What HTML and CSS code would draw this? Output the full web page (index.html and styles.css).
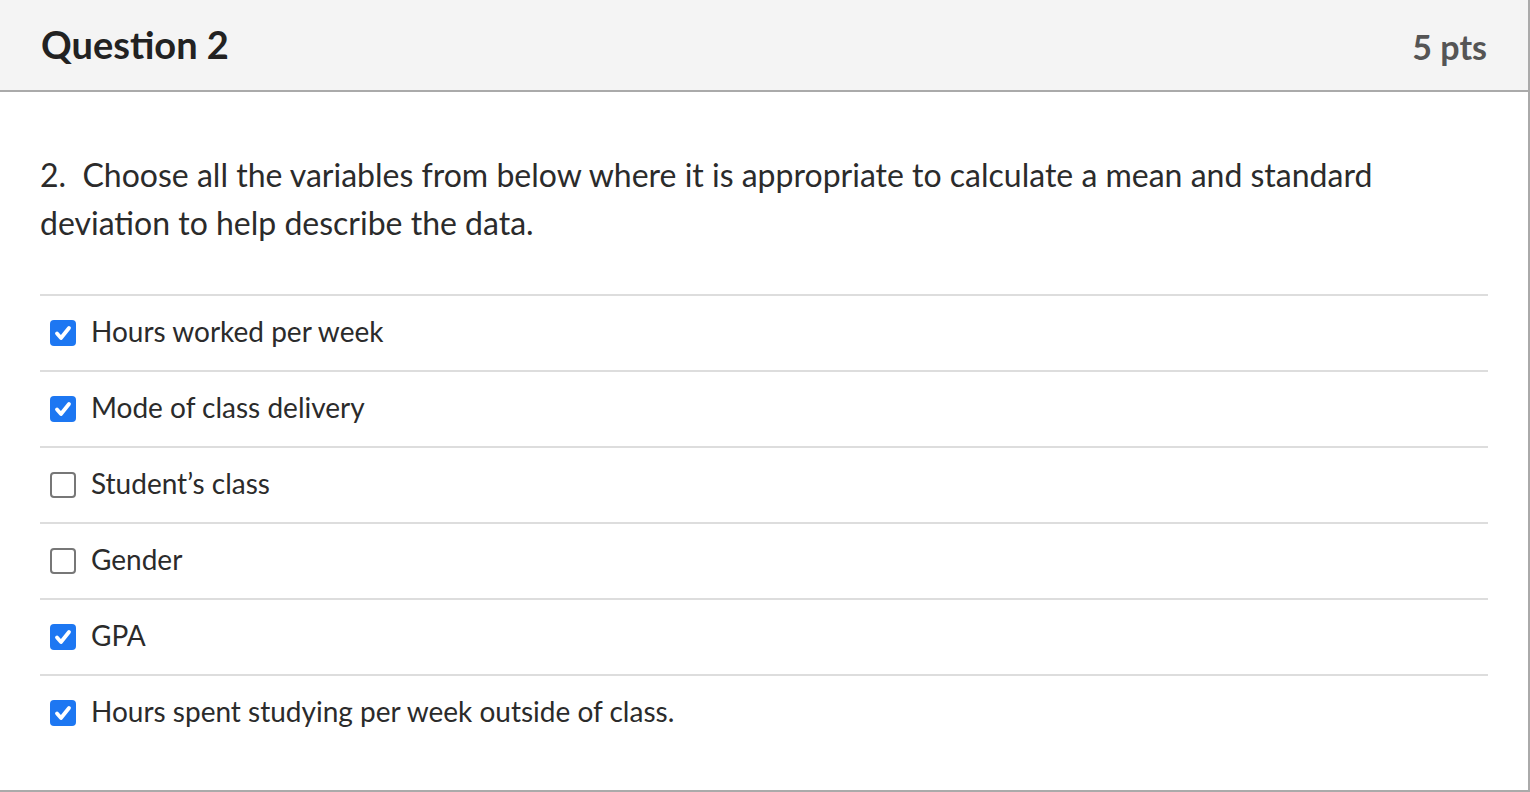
FILE: index.html
```html
<!DOCTYPE html>
<html lang="en">
<head>
<meta charset="utf-8">
<title>Question 2</title>
<link rel="stylesheet" href="styles.css">
</head>
<body>
<div class="question">
  <div class="q-header">
    <h2 class="q-title">Question 2</h2>
    <span class="q-points">5 pts</span>
  </div>
  <div class="q-body">
    <p class="q-text">2.&nbsp; Choose all the variables from below where it is appropriate to calculate a mean and standard deviation to help describe the data.</p>
    <ul class="answers">
      <li class="answer"><span class="box checked"><svg viewBox="0 0 26 26"><path d="M7 13.5 L11 18 L19 8" fill="none" stroke="#fff" stroke-width="3.8" stroke-linecap="round" stroke-linejoin="round"/></svg></span><span class="label">Hours worked per week</span></li>
      <li class="answer"><span class="box checked"><svg viewBox="0 0 26 26"><path d="M7 13.5 L11 18 L19 8" fill="none" stroke="#fff" stroke-width="3.8" stroke-linecap="round" stroke-linejoin="round"/></svg></span><span class="label">Mode of class delivery</span></li>
      <li class="answer"><span class="box"></span><span class="label">Student’s class</span></li>
      <li class="answer"><span class="box"></span><span class="label">Gender</span></li>
      <li class="answer"><span class="box checked"><svg viewBox="0 0 26 26"><path d="M7 13.5 L11 18 L19 8" fill="none" stroke="#fff" stroke-width="3.8" stroke-linecap="round" stroke-linejoin="round"/></svg></span><span class="label">GPA</span></li>
      <li class="answer"><span class="box checked"><svg viewBox="0 0 26 26"><path d="M7 13.5 L11 18 L19 8" fill="none" stroke="#fff" stroke-width="3.8" stroke-linecap="round" stroke-linejoin="round"/></svg></span><span class="label">Hours spent studying per week outside of class.</span></li>
    </ul>
  </div>
</div>
</body>
</html>
```

FILE: styles.css
```css
html, body {
  margin: 0;
  padding: 0;
  background: #fff;
}
body {
  font-family: Lato, "Open Sans", sans-serif;
  color: #2b2b2b;
}
.question {
  width: 1528px;
  height: 790px;
  border-right: 2px solid #aaaaaa;
  border-bottom: 2px solid #aaaaaa;
  display: flex;
  flex-direction: column;
}
.q-header {
  height: 90px;
  background: #f4f4f4;
  border-bottom: 2px solid #aaaaaa;
  display: flex;
  align-items: center;
  justify-content: space-between;
  padding: 0 41px 0 41px;
  box-sizing: content-box;
}
.q-title {
  margin: 0;
  font-size: 38px;
  font-weight: 700;
  color: #222;
  position: relative;
  top: -1px;
}
.q-points {
  font-size: 34px;
  font-weight: 700;
  color: #555;
  position: relative;
  top: 1px;
}
.q-body {
  padding: 59px 40px 0 40px;
}
.q-text {
  margin: 0 0 47px 0;
  font-size: 32px;
  line-height: 48px;
}
.answers {
  list-style: none;
  margin: 0;
  padding: 0;
}
.answer {
  border-top: 2px solid #dddddd;
  height: 74px;
  display: flex;
  align-items: center;
  padding-left: 10px;
}
.box {
  width: 26px;
  height: 26px;
  box-sizing: border-box;
  border: 2px solid #777;
  border-radius: 4px;
  background: #fff;
  flex: none;
  margin-right: 15px;
  display: flex;
}
.box.checked {
  border: none;
  background: #1d77f2;
}
.box svg {
  width: 26px;
  height: 26px;
}
.label {
  font-size: 28px;
  line-height: 34px;
  padding-bottom: 5px;
}
```
